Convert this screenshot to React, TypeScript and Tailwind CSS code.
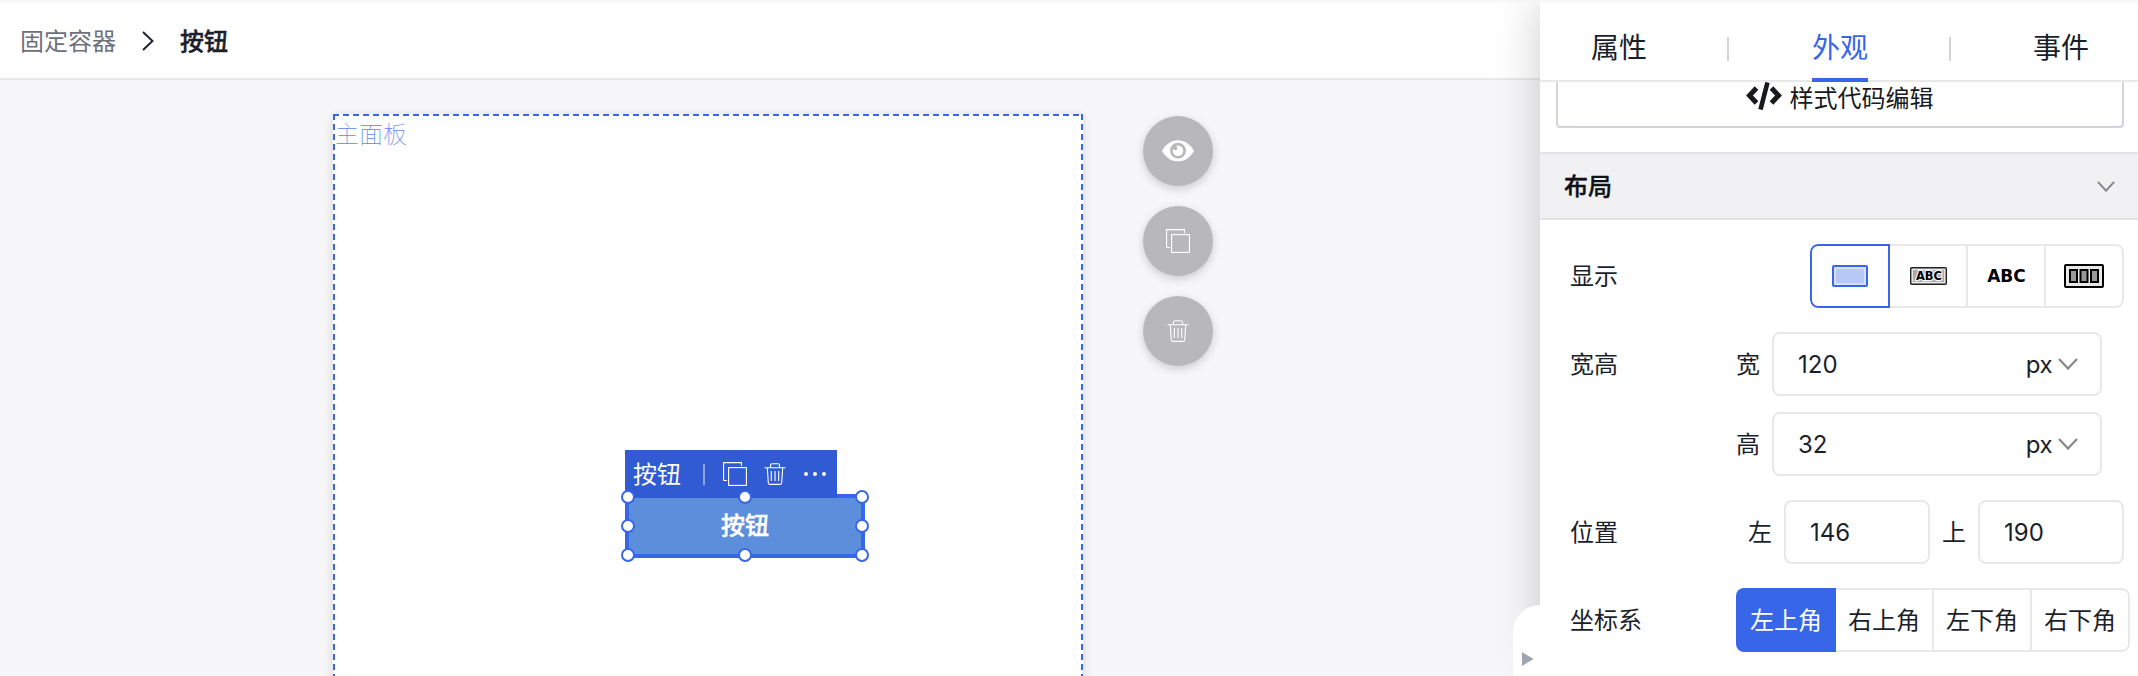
import React from "react";

const CopyIcon = ({ size }: { size: number }) => (
  <svg width={size} height={size} viewBox="0 0 24 24" fill="none" stroke="currentColor" strokeWidth="1.1">
    <path d="M4 18.5H0.6V0.6H18.5V4" />
    <rect x="5.6" y="5.6" width="17.8" height="17.8" />
  </svg>
);

const TrashIcon = () => (
  <svg width="22" height="22" viewBox="0 0 22 22" fill="none" stroke="currentColor" strokeWidth="1.1">
    <path d="M0.5 4.7H21.5M6.5 4.4V2.2Q6.5 0.8 8 0.8H14Q15.5 0.8 15.5 2.2V4.4M3.3 4.8L4.3 20Q4.5 21.4 6 21.4H16Q17.5 21.4 17.7 20L18.7 4.8M7.3 8V18M11 8V18M14.7 8V18" />
  </svg>
);

const EyeIcon = () => (
  <svg width="32" height="22" viewBox="0 0 32 22">
    <path d="M0 11C4 4 9.500 0.300 16 0.300S28 4 32 11C28 18 22.500 21.300 16 21.300S4 18 0 11Z" fill="#fff" />
    <circle cx="16" cy="10.700" r="6.600" fill="#fff" stroke="#b8b8ba" strokeWidth="2.600" />
    <circle cx="13.200" cy="8.200" r="2.100" fill="#b8b8ba" />
  </svg>
);

const Chevron = ({ w, h }: { w: number; h: number }) => (
  <svg width={w} height={h} viewBox="0 0 20 12" fill="none" stroke="#86868b" strokeWidth="2.2" preserveAspectRatio="none">
    <path d="M1 1L10 10.500L19 1" />
  </svg>
);

const Round = ({ children }: { children: React.ReactNode }) => (
  <button className="flex size-[70px] items-center justify-center rounded-full bg-[#b8b8ba] text-white shadow-[0_3px_10px_rgba(0,0,0,0.18)]">
    {children}
  </button>
);

const Row = ({ label, children, className = "" }: { label: string; children: React.ReactNode; className?: string }) => (
  <div className={`flex h-16 items-center pl-[30px] ${className}`}>
    <span className="w-[166px] shrink-0 pt-[2px]">{label}</span>
    {children}
  </div>
);

const SizeField = ({ name, value }: { name: string; value: string }) => (
  <>
    <span className="w-9 shrink-0 pt-[2px]">{name}</span>
    <div className="flex h-16 w-[330px] items-center rounded-lg border-2 border-[#e8e8e8] pr-[22px] pl-6">
      <span className="flex-1 pt-[2px]">{value}</span>
      <span className="mr-[6px] pt-[2px] tracking-[-0.5px]">px</span>
      <Chevron w={20} h={12} />
    </div>
  </>
);

const PosField = ({ name, value }: { name: string; value: string }) => (
  <>
    <span className="w-9 shrink-0 pt-[2px]">{name}</span>
    <div className="flex h-16 w-[146px] items-center rounded-lg border-2 border-[#e8e8e8] pt-[2px] pl-6">{value}</div>
  </>
);

const handles = [
  "-left-[8px] -top-[8px]",
  "left-[109px] -top-[8px]",
  "left-[226px] -top-[8px]",
  "-left-[8px] top-[21px]",
  "left-[226px] top-[21px]",
  "-left-[8px] top-[50px]",
  "left-[109px] top-[50px]",
  "left-[226px] top-[50px]",
];

export default function App() {
  return (
    <div className="relative flex h-[676px] w-[2138px] overflow-hidden bg-[#f7f7f9] font-[Inter,'Noto_Sans_CJK_SC',sans-serif] text-[24px] leading-9 text-[#1b1f2b]">
      <main className="flex w-[1540px] shrink-0 flex-col">
        <header className="flex h-20 shrink-0 items-center border-b-2 border-[#e8e8e8] bg-white pt-[6px] pl-5">
          <span className="text-[#6d707b]">固定容器</span>
          <svg className="mr-[26px] ml-[26px] -mt-[2px]" width="12" height="20" viewBox="0 0 12 20" fill="none" stroke="#1b1f2b" strokeWidth="1.9">
            <path d="M1 1L10.500 10L1 19" />
          </svg>
          <span className="font-medium [-webkit-text-stroke:0.4px_currentColor]">按钮</span>
        </header>

        <section className="flex pt-[34px] pl-[333px]">
          <div className="relative h-[700px] w-[750px] shrink-0 bg-white shadow-[0_2px_10px_rgba(0,0,0,0.14)]">
            <svg className="absolute inset-0" width="750" height="700" fill="none" stroke="#3866e9" strokeWidth="2">
              <path d="M0 1H750" strokeDasharray="6 4" />
              <path d="M1 0V700M749 0V700" strokeDasharray="6 4" />
            </svg>
            <div className="pt-[3px] pl-[2px] font-thin text-[#5f85ef]">主面板</div>

            <div className="absolute top-[380px] left-[292px] flex h-16 w-60 items-center justify-center border-4 border-[#3866e9] bg-[#5c8edb] font-medium text-white [-webkit-text-stroke:0.4px_currentColor]">
              按钮
            </div>
            <div className="absolute top-[336px] left-[292px] flex h-12 w-[212px] items-center bg-[#315bd2] pl-2 text-white">
              <span className="pt-px">按钮</span>
              <i className="ml-[22px] h-[21px] w-[2px] bg-[#8ca4e7]" />
              <span className="ml-[18px]"><CopyIcon size={24} /></span>
              <span className="ml-[17px]"><TrashIcon /></span>
              <span className="ml-[18px] flex gap-[5px]">
                <i className="size-1 rounded-full bg-white" />
                <i className="size-1 rounded-full bg-white" />
                <i className="size-1 rounded-full bg-white" />
              </span>
            </div>
            <div className="absolute top-[384px] left-[296px]">
              {handles.map((h) => (
                <i key={h} className={`absolute size-[14px] rounded-full border-2 border-[#3866e9] bg-white ${h}`} />
              ))}
            </div>
          </div>
          <div className="ml-[60px] flex flex-col gap-5 pt-[2px]">
            <Round><EyeIcon /></Round>
            <Round><CopyIcon size={24} /></Round>
            <Round><TrashIcon /></Round>
          </div>
        </section>
      </main>

      <aside className="relative w-[598px] shrink-0 bg-white shadow-[0_0_44px_rgba(0,0,0,0.2)]">
        <div className="absolute top-[605px] -left-[27px] h-24 w-[27px] rounded-tl-[27px] bg-white pt-[47px] pl-[9px]">
          <svg width="12" height="14" viewBox="0 0 12 14">
            <path d="M0 0L11.500 7L0 14Z" fill="#a0a4b2" />
          </svg>
        </div>

        <nav className="flex h-[82px] items-center border-b-2 border-[#e8e8e8] pl-[51px] text-[28px]">
          <span className="mt-[16px]">属性</span>
          <i className="mt-[18px] ml-[80px] h-6 w-[2px] bg-[#d4d4d8]" />
          <span className="relative mt-[16px] ml-[83px] text-[#3866e9]">
            外观
            <i className="absolute inset-x-0 top-[48px] h-1 bg-[#3866e9]" />
          </span>
          <i className="mt-[18px] ml-[81px] h-6 w-[2px] bg-[#d4d4d8]" />
          <span className="mt-[16px] ml-[82px]">事件</span>
        </nav>

        <div className="mx-4 flex h-[46px] w-[568px] justify-center rounded-b border-2 border-t-0 border-[#d4d4da] text-[#17191d]">
          <svg className="-ml-px mr-[8px]" width="36" height="28" viewBox="0 0 36 28" fill="none" stroke="currentColor" strokeWidth="5">
            <path d="M10.500 6L3.500 13.500L10.500 21M25.500 6L32.500 13.500L25.500 21" />
            <path d="M21.500 0.500L14.500 27.500" strokeWidth="4.600" />
          </svg>
          <span className="-mt-[1px]">样式代码编辑</span>
        </div>

        <div className="mt-6 flex h-[68px] items-center justify-between border-y-2 border-[#e3e3e5] bg-[#f1f1f4] pr-[23px] pl-6">
          <span className="pt-px font-medium text-[#101219] [-webkit-text-stroke:0.4px_currentColor]">布局</span>
          <Chevron w={18} h={11} />
        </div>

        <Row label="显示" className="mt-6">
          <div className="ml-[74px] flex h-16 w-[314px] overflow-hidden rounded-lg">
            <div className="flex w-20 items-center justify-center rounded-l-lg border-2 border-[#3866e9]">
              <svg width="36" height="22" viewBox="0 0 36 22">
                <rect x="1" y="1" width="34" height="20" rx="1" fill="#d7e0fa" stroke="#3866e9" strokeWidth="2" />
                <rect x="4" y="4" width="28" height="14" fill="#b7c8f7" />
              </svg>
            </div>
            <div className="flex w-[78px] items-center justify-center border-y-2 border-r-2 border-[#e8e8e8]">
              <svg width="37" height="18" viewBox="0 0 37 18">
                <rect x="0.700" y="0.700" width="35.600" height="16.600" rx="1" fill="#e8e8e8" stroke="#222" strokeWidth="1.400" />
                <rect x="3" y="3" width="31" height="12" fill="#aaa" />
                <text x="19" y="13.200" textAnchor="middle" textLength="26" lengthAdjust="spacingAndGlyphs" fontFamily="DejaVu Sans" fontWeight="700" fontSize="12.300" stroke="#f4f4f4" strokeWidth="2.500" paintOrder="stroke" fill="#000">ABC</text>
              </svg>
            </div>
            <div className="flex w-[78px] items-center justify-center border-y-2 border-r-2 border-[#e8e8e8] pl-px">
              <span className="font-['DejaVu_Sans'] text-[17px] font-bold text-black">ABC</span>
            </div>
            <div className="flex w-[78px] items-center justify-center rounded-r-lg border-y-2 border-r-2 border-[#e8e8e8]">
              <svg width="40" height="24" viewBox="0 0 40 24" stroke="#000" strokeWidth="2">
                <rect x="1" y="1" width="38" height="22" rx="1" fill="#e8e8e8" />
                <rect x="6" y="6" width="7" height="12" fill="#999" />
                <rect x="16.500" y="6" width="7" height="12" fill="#999" />
                <rect x="27" y="6" width="7" height="12" fill="#999" />
              </svg>
            </div>
          </div>
        </Row>
        <Row label="宽高" className="mt-6"><SizeField name="宽" value="120" /></Row>
        <Row label="" className="mt-4"><SizeField name="高" value="32" /></Row>
        <Row label="位置" className="mt-6">
          <i className="w-3 shrink-0" />
          <PosField name="左" value="146" />
          <i className="w-3 shrink-0" />
          <PosField name="上" value="190" />
        </Row>
        <Row label="坐标系" className="mt-6">
          <div className="flex h-16 shrink-0 overflow-hidden rounded-lg">
            <span className="flex w-[100px] items-center justify-center bg-[#3866e9] pt-[2px] text-white">左上角</span>
            <span className="flex w-[98px] items-center justify-center border-y-2 border-r-2 border-[#e8e8e8] pt-[2px]">右上角</span>
            <span className="flex w-[98px] items-center justify-center border-y-2 border-r-2 border-[#e8e8e8] pt-[2px]">左下角</span>
            <span className="flex w-[98px] items-center justify-center rounded-r-lg border-y-2 border-r-2 border-[#e8e8e8] pt-[2px]">右下角</span>
          </div>
        </Row>
      </aside>
      <div className="absolute inset-x-0 top-0 h-1 bg-gradient-to-b from-[#f4f7f6] to-white/0" />
    </div>
  );
}
